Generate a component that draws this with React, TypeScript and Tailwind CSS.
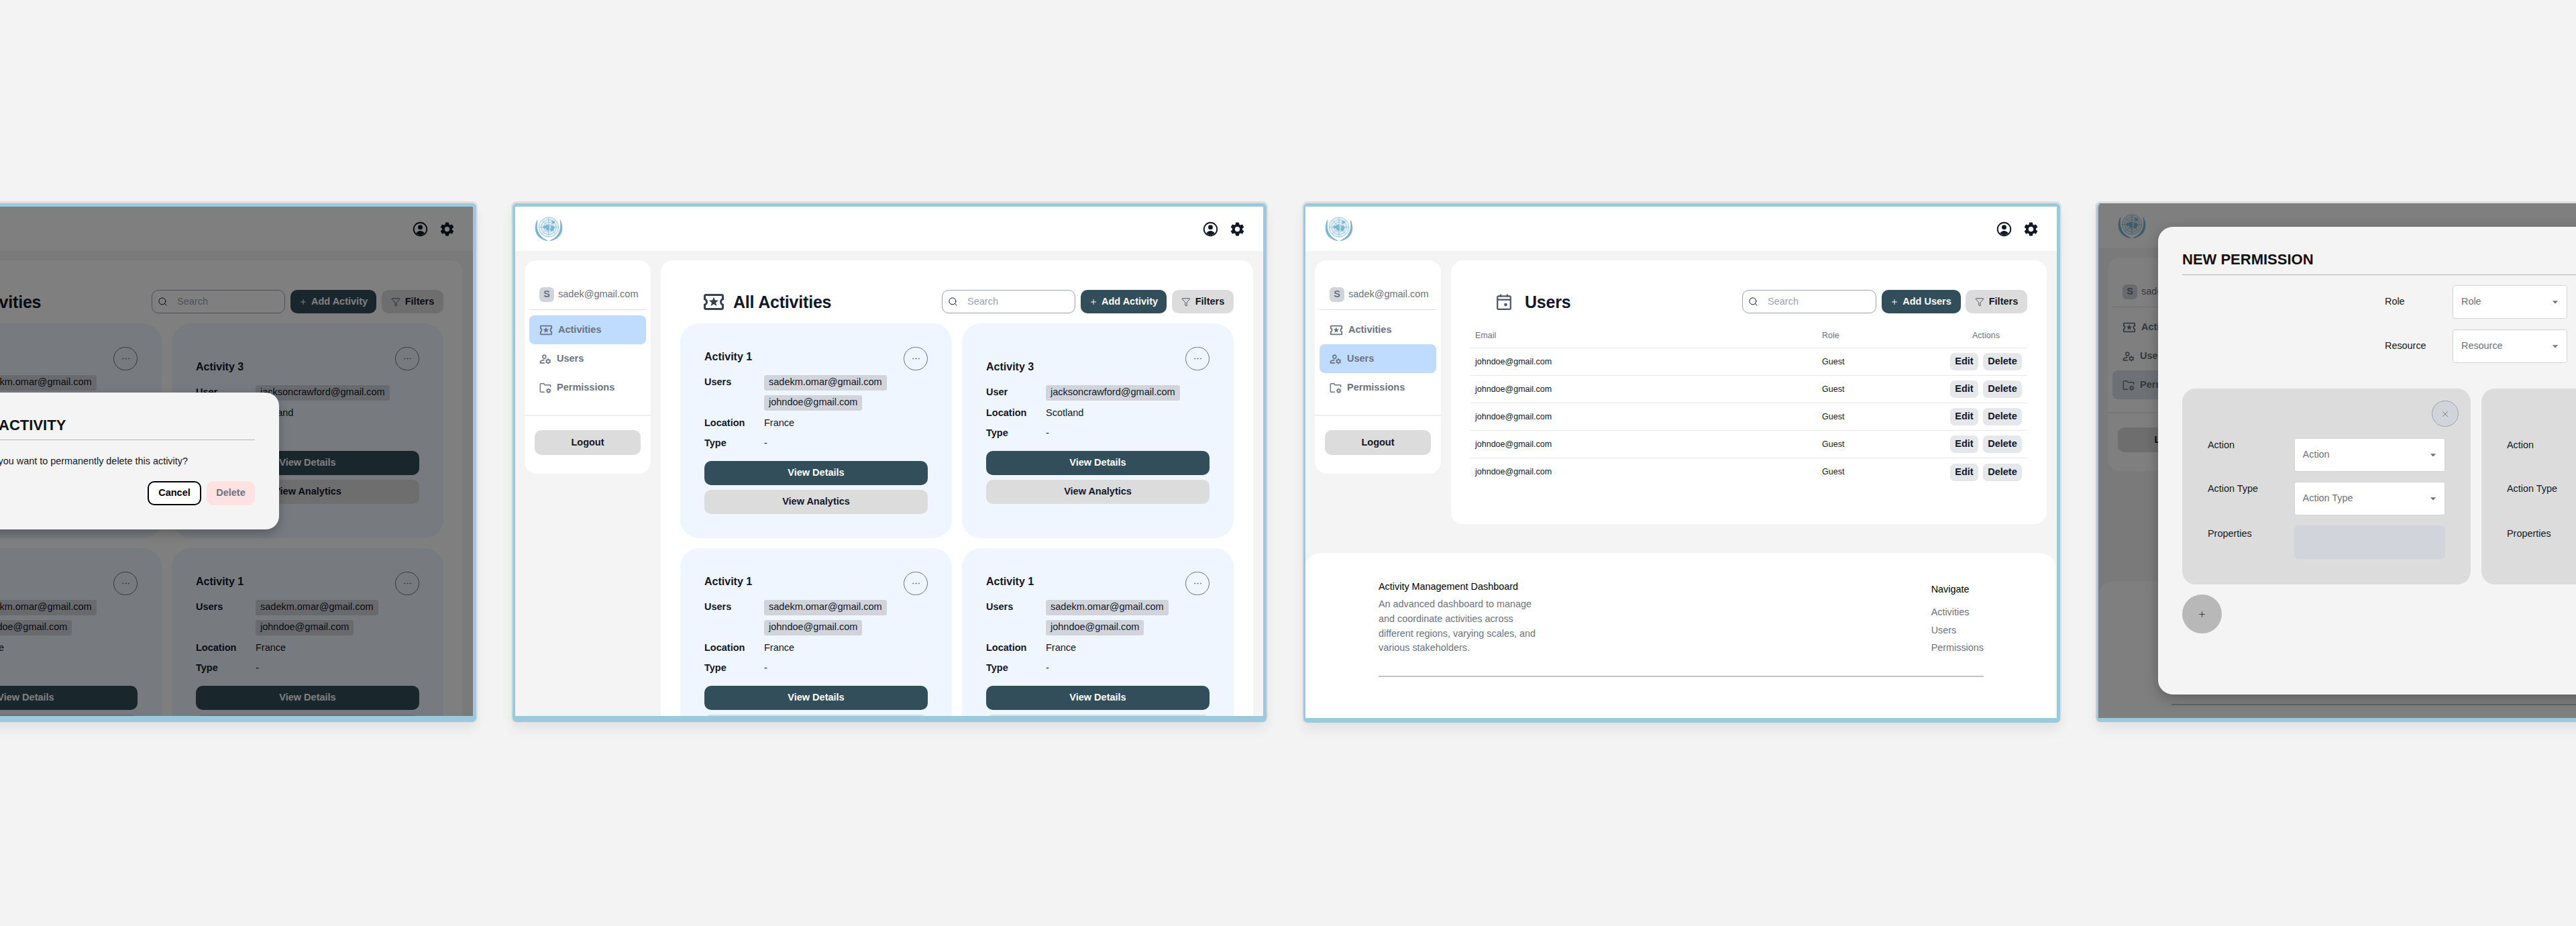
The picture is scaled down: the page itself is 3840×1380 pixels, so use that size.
import type { ReactNode } from "react";
import clsx from "clsx";
import { Ellipsis, Filter, Plus, Search, X } from "lucide-react";
import { MdOutlineLocalActivity, MdOutlineManageAccounts, MdSettings } from "react-icons/md";

function UnLogo() {
    const wreath = (
        <path
            d="M4.4 3.5C-1.4 13-1 27 10 33c3.2 1.7 6.8 2.8 10.4 3.6-3-2.6-7-4-9.8-6.8C6 25.2 3.6 19 3.8 13c.1-3.2.2-6.4.6-9.5z"
            fill="currentColor"
            stroke="none"
        />
    );
    return (
        <svg viewBox="0 0 42 37" className="h-[37px] w-[42px] text-[#7db6d4]" fill="none" stroke="currentColor">
            {wreath}
            <g transform="translate(42 0) scale(-1 1)">{wreath}</g>
            {/* Globe */}
            <circle cx="21" cy="15.5" r="15" fill="#e6f1f7" stroke="none" />
            <g strokeWidth="0.7">
                <circle cx="21" cy="15.5" r="14.7" />
                <circle cx="21" cy="15.5" r="11" />
                <circle cx="21" cy="15.5" r="7.4" />
                <circle cx="21" cy="15.5" r="3.8" />
                <path d="M21 1v29M6.4 15.5h29.2M10.7 5.2l20.6 20.6M31.3 5.2 10.7 25.8" />
            </g>
            <path
                d="M12 15c2-2.5 4-1 6-3 2-.6 3.4 0 3.6 2l-1.6 1.6 2 2.4-1.6 3.6-2.4-1.4-1-2.6-3.6.2zM25 6c2.4-.8 4.6.4 5.6 2.6L28 10.6l-2-1.2zM24 13.6c2.4-1 5.2.2 6 2.4l-2 4.4-3.4 1.4-2-2.4 2-2.4z"
                fill="currentColor"
                stroke="none"
            />
        </svg>
    );
}

function UserCircleIcon() {
    return (
        <svg viewBox="0 0 24 24" className="h-[23px] w-[23px] text-[#111827]" fill="currentColor">
            <circle cx="12" cy="12" r="10.2" fill="none" stroke="currentColor" strokeWidth="2" />
            <circle cx="12" cy="9" r="3.6" />
            <path d="M5.5 18.6c1.6-2.6 3.8-3.9 6.5-3.9s4.9 1.3 6.5 3.9a10 10 0 0 1-13 0z" />
        </svg>
    );
}

function FolderGearIcon() {
    return (
        <svg viewBox="0 0 24 24" className="h-[20px] w-[20px] shrink-0" fill="none" stroke="currentColor" strokeWidth="1.7">
            <path d="M10.5 19.5H3.8a1 1 0 0 1-1-1V5.5a1 1 0 0 1 1-1h5.4l2 2.4h9a1 1 0 0 1 1 1v3" />
            <circle cx="17.6" cy="17.2" r="2.5" />
            <path d="M17.6 12.6v2M17.6 19.8v2M13 17.2h2M20.2 17.2h2M14.4 14l1.4 1.4M19.4 19l1.4 1.4M14.4 20.4l1.4-1.4M19.4 15.4l1.4-1.4" strokeWidth="1.4" />
        </svg>
    );
}

function CalendarIcon() {
    return (
        <svg viewBox="0 0 22 24" className="h-[24px] w-[22px] text-[#4b5563]" fill="none" stroke="currentColor" strokeWidth="2.2">
            <rect x="1.2" y="3.4" width="19.6" height="19.4" rx="1.6" />
            <path d="M1.2 8.6h19.6M6 0.4v4M16 0.4v4" />
            <circle cx="13.5" cy="16" r="2.3" fill="currentColor" stroke="none" />
        </svg>
    );
}

function Sidebar({ active, activeClass }: { active: string; activeClass: string }) {
    const items = [
        { label: "Activities", icon: <MdOutlineLocalActivity className="h-[22px] w-[22px] shrink-0" /> },
        { label: "Users", icon: <MdOutlineManageAccounts className="h-[20px] w-[20px] shrink-0" /> },
        { label: "Permissions", icon: <FolderGearIcon /> },
    ];

    return (
        <aside className="w-[188px] shrink-0 self-start rounded-[18px] bg-white pt-[40px] pb-[28px]">
            <div className="mx-[7px] border-b border-[#e0e0e0] pb-[11px] pl-[15px]">
                <div className="flex items-center gap-[6px]">
                    <span className="flex h-[22px] w-[22px] shrink-0 items-center justify-center rounded-[6px] bg-[#d1d5db] text-[14.5px] font-bold text-[#6b7280]">S</span>
                    <span className="whitespace-nowrap text-[14.5px] text-[#6b7280]">sadek@gmail.com</span>
                </div>
            </div>
            <nav className="mt-[8px] mb-[19px] px-[7px]">
                {items.map((item) => (
                    <div
                        key={item.label}
                        className={clsx(
                            "flex h-[43px] items-center gap-[7px] rounded-[8px] px-[14px] text-[14.5px] font-bold text-[#6b7280]",
                            active === item.label && activeClass,
                        )}
                    >
                        {item.icon}
                        {item.label}
                    </div>
                ))}
            </nav>
            <div className="border-t-2 border-[#eeeeee] px-[15px] pt-[21px]">
                <button className="h-[37px] w-full rounded-[10px] bg-[#dcdcdc] text-[14.5px] font-bold text-[#111827]">Logout</button>
            </div>
        </aside>
    );
}

function Toolbar({ addLabel, searchClass, addClass, gapClass }: { addLabel: string; searchClass: string; addClass: string; gapClass: string }) {
    return (
        <div className={clsx("flex items-center", gapClass)}>
            <div className={clsx("flex h-[35px] items-center gap-[14px] rounded-[10px] border-[1.5px] border-[#9ca3af] bg-white px-[8px]", searchClass)}>
                <Search className="h-[15px] w-[15px] text-[#111827]" strokeWidth={1.6} />
                <span className="text-[14.5px] text-[#9ca3af]">Search</span>
            </div>
            <button className={clsx("flex h-[35px] items-center justify-center gap-[6px] rounded-[10px] bg-[#324e5b] text-[14.5px] font-bold text-white", addClass)}>
                <Plus className="h-[12px] w-[12px]" strokeWidth={2} />
                {addLabel}
            </button>
            <button className="flex h-[35px] w-[92px] items-center justify-center gap-[7px] rounded-[10px] bg-[#dcdcdc] text-[14.5px] font-bold text-[#111827]">
                <Filter className="h-[14px] w-[14px] text-[#374151]" strokeWidth={1.5} />
                Filters
            </button>
        </div>
    );
}

function Chip({ children }: { children: ReactNode }) {
    return <span className="flex h-[23px] items-center rounded-[3px] bg-[#d1d5db] px-[7px]">{children}</span>;
}

type ActivityProps = {
    title: string;
    userLabel: string;
    users: string[];
    location: string;
};

function ActivityCard({ title, userLabel, users, location }: ActivityProps) {
    return (
        <div className="relative flex h-[320px] flex-col justify-center rounded-[28px] bg-[#eff6ff] px-[36px] text-[14.5px] text-[#111827]">
            <button className="absolute top-[35px] right-[36px] flex h-[35px] w-[36px] items-center justify-center rounded-full border-[1.5px] border-[#6b7280]">
                <Ellipsis className="h-[15px] w-[15px] text-[#6b7280]" strokeWidth={1.5} />
            </button>
            <h3 className="flex h-[26px] items-center text-[16px] font-bold">{title}</h3>
            <div className="mt-[14px] flex flex-col gap-[7.5px]">
                <div className="flex">
                    <span className="flex h-[23px] w-[89px] items-center font-bold">{userLabel}</span>
                    <div className="flex flex-col items-start gap-[7px]">
                        {users.map((u) => (
                            <Chip key={u}>{u}</Chip>
                        ))}
                    </div>
                </div>
                <div className="flex h-[23px] items-center">
                    <span className="w-[89px] font-bold">Location</span>
                    <span>{location}</span>
                </div>
                <div className="flex h-[23px] items-center">
                    <span className="w-[89px] font-bold">Type</span>
                    <span>-</span>
                </div>
            </div>
            <div className="mt-[14px] flex flex-col gap-[7px] font-bold">
                <button className="h-[36px] rounded-[10px] bg-[#324e5b] text-white">View Details</button>
                <button className="h-[36px] rounded-[10px] bg-[#dcdcdc]">View Analytics</button>
            </div>
        </div>
    );
}

function Shell({ active, activeClass = "bg-[#bfdbfe]", children, footer }: { active: string; activeClass?: string; children: ReactNode; footer?: ReactNode }) {
    return (
        <div className="flex h-full flex-col rounded-[3px] bg-[#f4f4f4]">
            <header className="flex h-[66px] shrink-0 items-center justify-between bg-white pr-[26px] pl-[29px]">
                <UnLogo />
                <div className="flex items-center gap-[16px]">
                    <UserCircleIcon />
                    <MdSettings className="h-[25px] w-[25px] text-[#111827]" />
                </div>
            </header>
            <div className="flex shrink-0 gap-[15px] pt-[14px] pr-[15px] pl-[14px]">
                <Sidebar active={active} activeClass={activeClass} />
                {children}
            </div>
            {footer}
        </div>
    );
}

function ActivitiesMain() {
    const mainUsers = ["sadekm.omar@gmail.com", "johndoe@gmail.com"];
    return (
        <main className="min-w-0 flex-1 rounded-[18px] bg-white px-[29px] pt-[44px]">
            <div className="flex h-[35px] items-center justify-between pl-[35px]">
                <h1 className="flex items-center gap-[14px] text-[25px] leading-[30px] font-bold tracking-[-0.2px] text-[#111827]">
                    <MdOutlineLocalActivity className="-m-[3px] h-[36px] w-[36px] text-[#374151]" />
                    All Activities
                </h1>
                <Toolbar addLabel="Add Activity" searchClass="w-[199px]" addClass="w-[128px]" gapClass="gap-[8px]" />
            </div>
            <div className="mt-[15px] grid grid-cols-2 gap-[15px]">
                <ActivityCard title="Activity 1" userLabel="Users" users={mainUsers} location="France" />
                <ActivityCard title="Activity 3" userLabel="User" users={["jacksoncrawford@gmail.com"]} location="Scotland" />
                <ActivityCard title="Activity 1" userLabel="Users" users={mainUsers} location="France" />
                <ActivityCard title="Activity 1" userLabel="Users" users={mainUsers} location="France" />
            </div>
        </main>
    );
}

function Footer() {
    return (
        <footer className="mt-[43px] mr-[2px] flex-1 rounded-t-[22px] bg-white pt-[40px] pr-[107px] pl-[109px] text-[14.4px]">
            <div className="flex items-start justify-between">
                <div>
                    <p className="leading-[20px] text-black">Activity Management Dashboard</p>
                    <p className="mt-[6px] leading-[21.8px] text-[#6b7280]">
                        An advanced dashboard to manage
                        <br />
                        and coordinate activities across
                        <br />
                        different regions, varying scales, and
                        <br />
                        various stakeholders.
                    </p>
                </div>
                <div className="pt-[4px] leading-[20px]">
                    <p className="text-black">Navigate</p>
                    <ul className="mt-[14px] flex flex-col gap-[6.5px] text-[#6b7280]">
                        <li>Activities</li>
                        <li>Users</li>
                        <li>Permissions</li>
                    </ul>
                </div>
            </div>
            <div className="mt-[30px] h-[2px] bg-[#c4c4c4]" />
        </footer>
    );
}

function UsersMain() {
    const rows = [0, 1, 2, 3, 4];
    return (
        <main className="min-w-0 flex-1 rounded-[18px] bg-white px-[29px] pt-[44px] pb-[57px]">
            <div className="flex h-[35px] items-center justify-between pl-[39px]">
                <h1 className="flex items-center gap-[20px] text-[25px] leading-[30px] font-bold tracking-[-0.2px] text-[#111827]">
                    <CalendarIcon />
                    Users
                </h1>
                <Toolbar addLabel="Add Users" searchClass="w-[200px]" addClass="w-[118px]" gapClass="gap-[7.5px]" />
            </div>
            <div className="mt-[16px] text-[12.5px] text-[#111827]">
                <div className="flex h-[36px] items-center border-b border-[#e5e7eb] text-[#6b7280]">
                    <span className="w-[524px] pl-[7px]">Email</span>
                    <span className="flex-1">Role</span>
                    <span className="mr-[8px] w-[107px] text-center">Actions</span>
                </div>
                {rows.map((r) => (
                    <div key={r} className={clsx("flex h-[41px] items-center", r < 4 && "border-b border-[#e5e7eb]")}>
                        <span className="w-[524px] pl-[7px]">johndoe@gmail.com</span>
                        <span className="flex-1">Guest</span>
                        <div className="mr-[8px] flex w-[107px] gap-[7px] text-[14.5px] font-bold">
                            <button className="flex h-[26px] w-[42px] items-center justify-center rounded-[7px] bg-[#e5e7eb]">Edit</button>
                            <button className="flex h-[26px] w-[58px] items-center justify-center rounded-[7px] bg-[#e5e7eb]">Delete</button>
                        </div>
                    </div>
                ))}
            </div>
        </main>
    );
}

function Select({ label, className }: { label: string; className: string }) {
    return (
        <div className={clsx("flex items-center justify-between rounded-[3px] border border-[#d1d5db] bg-white pr-[7px] pl-[12px] text-[14.4px] text-[#6b7280]", className)}>
            {label}
            <svg viewBox="0 0 24 24" className="h-[20px] w-[20px]" fill="currentColor">
                <path d="M7 10l5 5 5-5z" />
            </svg>
        </div>
    );
}

function ActionPanel() {
    return (
        <div className="relative h-[292px] w-[430px] shrink-0 rounded-[20px] bg-[#dcdcdc] px-[38px] pt-[74px] text-[14.4px] text-[#111827]">
            <button className="absolute top-[18px] right-[18px] flex h-[39px] w-[40px] items-center justify-center rounded-full border-[1.5px] border-[#9ca3af] bg-[#d1d5db]">
                <X className="h-[14px] w-[14px] text-[#6b7280]" strokeWidth={1.5} />
            </button>
            <div className="flex flex-col gap-[15px]">
                <div className="flex items-start">
                    <span className="w-[129px] leading-[20px]">Action</span>
                    <Select label="Action" className="h-[50px] w-[226px]" />
                </div>
                <div className="flex items-start">
                    <span className="w-[129px] leading-[20px]">Action Type</span>
                    <Select label="Action Type" className="h-[50px] w-[226px]" />
                </div>
                <div className="flex items-start">
                    <span className="w-[129px] pt-[2px] leading-[20px]">Properties</span>
                    <div className="h-[50px] w-[226px] rounded-[6px] bg-[#d1d5db]" />
                </div>
            </div>
        </div>
    );
}

export default function App() {
    const frame = "absolute overflow-hidden rounded-[6px] border-solid border-[#9bc9de] shadow-[0_-1px_0_2px_#dfdfdf,0_10px_18px_rgba(0,0,0,0.07)]";

    return (
        <div className="relative h-[1380px] w-[3840px] overflow-hidden bg-[#f3f3f3] font-['Liberation_Sans',Arial,sans-serif]">
            {/* Delete dialog */}
            <div className={clsx(frame, "top-[303px] left-[-414px] h-[773px] w-[1124px] border-t-[5px] border-r-[5px] border-b-[9px] border-l-[4px]")}>
                <Shell active="Activities">
                    <ActivitiesMain />
                </Shell>
                <div className="absolute inset-0 bg-black/50" />
                <div className="absolute top-[277px] left-[280px] w-[546px] rounded-[20px] bg-[#f4f4f4] p-[36px] shadow-[0_6px_16px_rgba(0,0,0,0.25)]">
                    <h2 className="border-b border-[#b5b5b5] pb-[8px] text-[22px] leading-[26px] font-bold text-[#111111]">DELETE ACTIVITY</h2>
                    <p className="mt-[21px] pl-[6px] text-[14.4px] leading-[20px] text-[#111827]">Are you sure you want to permanently delete this activity?</p>
                    <div className="mt-[20px] flex justify-end gap-[8px] text-[14.5px] font-bold">
                        <button className="h-[36px] w-[80px] rounded-[10px] border-2 border-black bg-white text-black">Cancel</button>
                        <button className="h-[36px] w-[72px] rounded-[10px] bg-[#fee2e2] text-[#6b7280]">Delete</button>
                    </div>
                </div>
            </div>

            {/* All activities */}
            <div className={clsx(frame, "top-[303px] left-[764px] h-[773px] w-[1124px] border-t-[5px] border-r-[5px] border-b-[9px] border-l-[4px]")}>
                <Shell active="Activities">
                    <ActivitiesMain />
                </Shell>
            </div>

            {/* Users */}
            <div className={clsx(frame, "top-[303px] left-[1943px] h-[774px] w-[1128px] border-t-[5px] border-r-[5px] border-b-[7px] border-l-[3px]")}>
                <Shell active="Users" footer={<Footer />}>
                    <UsersMain />
                </Shell>
            </div>

            {/* New permission dialog */}
            <div className={clsx(frame, "top-[303px] left-[3125px] h-[773px] w-[1128px] border-t-[1px] border-r-[5px] border-b-[6px] border-l-[3px] border-t-[#7a7a7a]")}>
                <Shell active="Permissions" activeClass="bg-[#dbe2ea]" footer={<Footer />}>
                    <main className="h-[439px] min-w-0 flex-1 rounded-[18px] bg-white" />
                </Shell>
                <div className="absolute inset-0 bg-black/50" />
                <div className="absolute top-[34px] left-[89px] h-[697px] w-[942px] rounded-[22px] bg-[#f4f4f4] px-[36px] pt-[36px] shadow-[0_6px_20px_rgba(0,0,0,0.25)]">
                    <h2 className="border-b border-[#b5b5b5] pb-[9px] text-[22px] leading-[26px] font-bold text-[#111111]">NEW PERMISSION</h2>
                    <div className="mt-[15px] flex flex-col items-center gap-[16px] pl-[6px] text-[14.4px] text-[#111827]">
                        <div className="flex items-center">
                            <span className="w-[101px]">Role</span>
                            <Select label="Role" className="h-[50px] w-[171px]" />
                        </div>
                        <div className="flex items-center">
                            <span className="w-[101px]">Resource</span>
                            <Select label="Resource" className="h-[50px] w-[171px]" />
                        </div>
                    </div>
                    <div className="mt-[38px] flex gap-[16px]">
                        <ActionPanel />
                        <ActionPanel />
                    </div>
                    <button className="mt-[15px] flex h-[58px] w-[59px] items-center justify-center rounded-full bg-[#b8b8b8]">
                        <Plus className="h-[13px] w-[13px] text-[#1f2937]" strokeWidth={1.6} />
                    </button>
                </div>
            </div>
        </div>
    );
}
